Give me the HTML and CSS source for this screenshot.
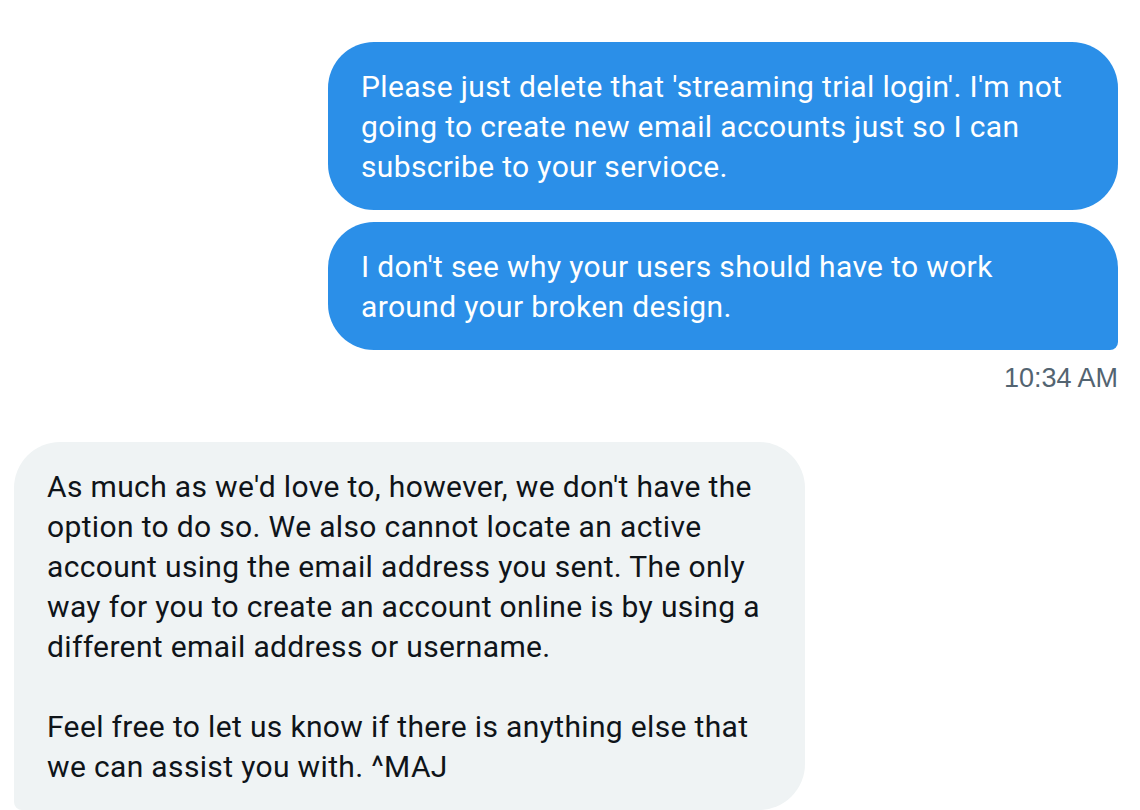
FILE: index.html
```html
<!DOCTYPE html>
<html>
<head>
<meta charset="utf-8">
<link rel="stylesheet" href="styles.css">
</head>
<body>
<main class="chat">
  <div class="sent">
    <div class="bubble out">Please just delete that 'streaming trial login'. I'm not<br>going to create new email accounts just so I can<br>subscribe to your servioce.</div>
    <div class="bubble out last">I don't see why your users should have to work<br>around your broken design.</div>
    <div class="time">10:34 AM</div>
  </div>
  <div class="received">
    <div class="bubble in">As much as we'd love to, however, we don't have the<br>option to do so. We also cannot locate an active<br>account using the email address you sent. The only<br>way for you to create an account online is by using a<br>different email address or username.<br><br>Feel free to let us know if there is anything else that<br>we can assist you with. ^MAJ</div>
  </div>
</main>
</body>
</html>
```
FILE: styles.css
```css
html, body {
  margin: 0;
  padding: 0;
  background: #ffffff;
  overflow: hidden;
}
.chat {
  display: flex;
  flex-direction: column;
  padding: 42px 22px 0 14px;
  height: 810px;
  box-sizing: border-box;
}
.sent {
  display: flex;
  flex-direction: column;
  align-items: flex-end;
  gap: 12px;
}
.bubble {
  font-family: Roboto, "Noto Sans", sans-serif;
  font-size: 30px;
  letter-spacing: 0.35px;
  line-height: 40px;
  padding: 25px 32px 23px 33px;
  border-radius: 46px;
  white-space: nowrap;
  box-sizing: border-box;
}
.out {
  width: 790px;
  background: #2b8fe8;
  color: #ffffff;
}
.out.last {
  border-bottom-right-radius: 8px;
}
.time {
  font-family: "Liberation Sans", Arial, sans-serif;
  font-size: 27px;
  line-height: 30px;
  color: #536471;
  margin-top: 1px;
}
.received {
  display: flex;
  margin-top: 49px;
}
.in {
  width: 791px;
  background: #eff3f4;
  color: #0f1419;
  border-bottom-left-radius: 8px;
}
```
